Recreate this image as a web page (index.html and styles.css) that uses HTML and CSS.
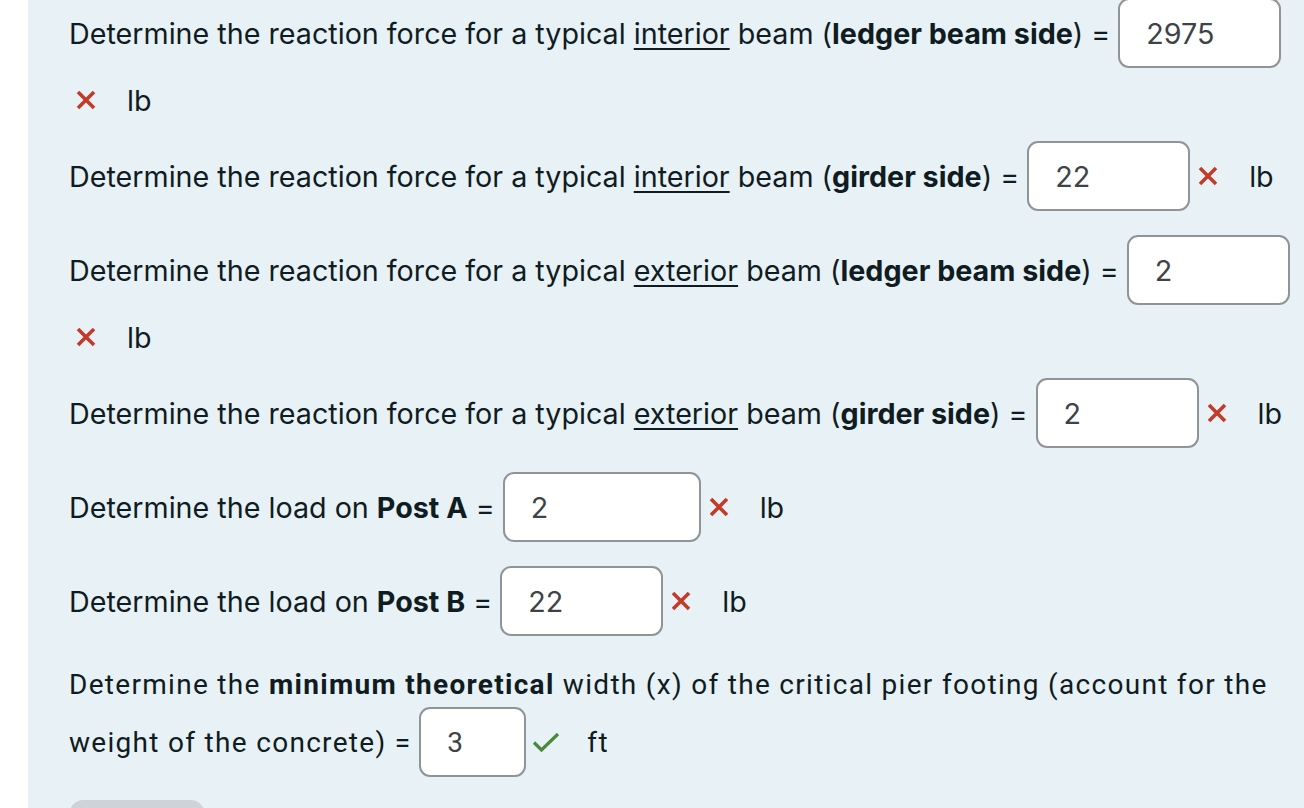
FILE: index.html
```html
<!DOCTYPE html>
<html lang="en">
<head>
<meta charset="utf-8">
<title>Beam reactions</title>
<link rel="stylesheet" href="styles.css">
</head>
<body>
<main class="panel">
  <div class="q first">
    <div class="line"><span class="txt">Determine the reaction force for a typical <u>interior</u> beam (<b>ledger beam side</b>) =</span><span class="inp w161">2975</span></div>
    <div class="line short"><span class="mark x"><svg viewBox="0 0 20 20"><path d="M2 2 L18 18 M18 2 L2 18"/></svg></span><span class="unit">lb</span></div>
  </div>
  <div class="q">
    <div class="line"><span class="txt">Determine the reaction force for a typical <u>interior</u> beam (<b>girder side</b>) =</span><span class="inp w161">22</span><span class="mark x"><svg viewBox="0 0 20 20"><path d="M2 2 L18 18 M18 2 L2 18"/></svg></span><span class="unit">lb</span></div>
  </div>
  <div class="q">
    <div class="line"><span class="txt">Determine the reaction force for a typical <u>exterior</u> beam (<b>ledger beam side</b>) =</span><span class="inp w161">2</span></div>
    <div class="line short"><span class="mark x"><svg viewBox="0 0 20 20"><path d="M2 2 L18 18 M18 2 L2 18"/></svg></span><span class="unit">lb</span></div>
  </div>
  <div class="q">
    <div class="line"><span class="txt">Determine the reaction force for a typical <u>exterior</u> beam (<b>girder side</b>) =</span><span class="inp w161">2</span><span class="mark x"><svg viewBox="0 0 20 20"><path d="M2 2 L18 18 M18 2 L2 18"/></svg></span><span class="unit">lb</span></div>
  </div>
  <div class="q">
    <div class="line"><span class="txt">Determine the load on <b>Post A</b> =</span><span class="inp w197">2</span><span class="mark x"><svg viewBox="0 0 20 20"><path d="M2 2 L18 18 M18 2 L2 18"/></svg></span><span class="unit">lb</span></div>
  </div>
  <div class="q">
    <div class="line"><span class="txt">Determine the load on <b>Post B</b> =</span><span class="inp w161">22</span><span class="mark x"><svg viewBox="0 0 20 20"><path d="M2 2 L18 18 M18 2 L2 18"/></svg></span><span class="unit">lb</span></div>
  </div>
  <div class="q last">
    <div class="line short"><span class="txt">Determine the <b>minimum theoretical</b> width (x) of the critical pier footing (account for the</span></div>
    <div class="line"><span class="txt">weight of the concrete) =</span><span class="inp w106">3</span><span class="mark ok"><svg viewBox="0 0 28 20"><path d="M2 10.5 L9.5 18 L26 2"/></svg></span><span class="unit">ft</span></div>
  </div>
  <div class="btn"></div>
</main>
</body>
</html>
```
FILE: styles.css
```css
html, body {
  margin: 0;
  padding: 0;
  background: #ffffff;
}
body {
  font-family: "Inter", "Liberation Sans", sans-serif;
  font-size: 28.7px;
  color: #0f1c22;
  overflow: hidden;
}
.panel {
  margin-left: 28px;
  background: #e8f1f5;
  min-height: 808px;
  padding-left: 41px;
  box-sizing: border-box;
  overflow: hidden;
}
.q {
  display: flex;
  flex-direction: column;
  gap: 15px;
  margin-bottom: 24px;
}
.q.first {
  margin-top: -2px;
}
.line {
  display: flex;
  align-items: center;
  height: 70px;
  white-space: nowrap;
}
.line.short {
  height: 34px;
}
.txt b {
  font-weight: 700;
}
.txt u {
  text-decoration-thickness: 2px;
  text-underline-offset: 4px;
}
.inp {
  box-sizing: border-box;
  height: 70px;
  margin-left: 8px;
  padding-left: 26px;
  display: flex;
  align-items: center;
  background: #ffffff;
  border: 2px solid #8f9499;
  border-radius: 11px;
  color: #3d4348;
}
.w161 { width: 163px; }
.w197 { width: 198px; }
.w106 { width: 107px; }
.mark {
  display: flex;
  align-items: center;
}
.mark svg {
  fill: none;
  stroke-linecap: butt;
}
.mark.x svg {
  width: 20px;
  height: 20px;
  stroke: #c23b2a;
  stroke-width: 3.6;
}
.inp + .mark.x {
  margin-left: 8px;
}
.line.short .mark.x {
  margin-left: 7px;
}
.mark.ok svg {
  width: 28px;
  height: 20px;
  stroke: #4a8a3c;
  stroke-width: 3.2;
}
.inp + .mark.ok {
  margin-left: 6px;
}
.unit {
  margin-left: 31px;
}
.mark.ok + .unit {
  margin-left: 27px;
}
.q.last {
  padding-top: 7px;
  gap: 6px;
  font-family: "Roboto", "Liberation Sans", sans-serif;
  font-size: 28px;
  letter-spacing: 1.3px;
  margin-bottom: 0;
}
.q.last .inp {
  letter-spacing: 0;
}
.btn {
  margin-top: 23px;
  width: 134px;
  height: 40px;
  border-radius: 13px;
  background: #cdd3d8;
  margin-left: 1px;
}
```
